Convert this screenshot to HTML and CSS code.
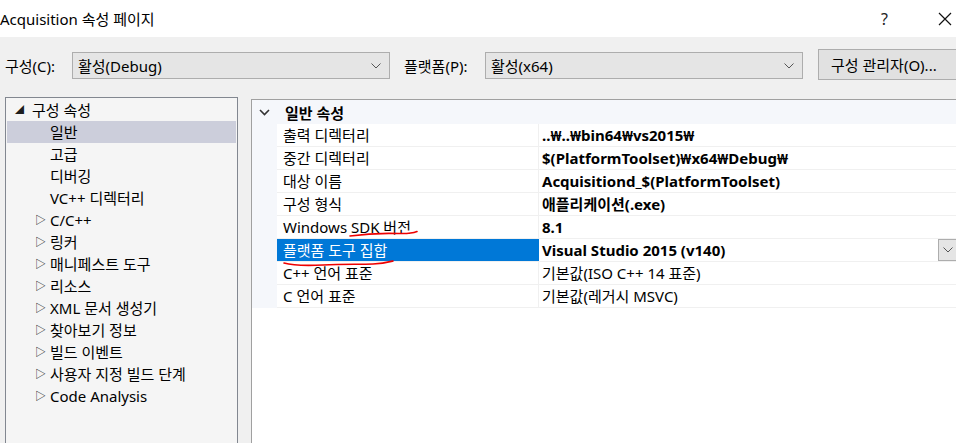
FILE: index.html
```
<!DOCTYPE html>
<html lang="ko">
<head>
	<meta charset="UTF-8">
	<title>Acquisition 속성 페이지</title>
	<link rel="stylesheet" href="styles.css">
</head>
<body>
	<div class="titlebar">
		<div class="title">Acquisition 속성 페이지</div>
		<div class="title-help">?</div>
		<div class="title-close">
			<svg width="14" height="14" viewBox="0 0 14 14"><path d="M1 1L13 13M13 1L1 13" stroke="#111" stroke-width="1.2" fill="none"/></svg>
		</div>
	</div>

	<div class="toolbar">
		<label class="tb-label">구성(C):</label>
		<div class="combo combo-config">
			<span>활성(Debug)</span>
			<svg class="combo-arrow" width="10" height="6" viewBox="0 0 10 6"><path d="M0.5 0.5L5 5L9.5 0.5" stroke="#555" fill="none"/></svg>
		</div>
		<label class="tb-label tb-label-platform">플랫폼(P):</label>
		<div class="combo combo-platform">
			<span>활성(x64)</span>
			<svg class="combo-arrow" width="10" height="6" viewBox="0 0 10 6"><path d="M0.5 0.5L5 5L9.5 0.5" stroke="#555" fill="none"/></svg>
		</div>
		<button class="btn-manager">구성 관리자(O)...</button>
	</div>

	<div class="main">
		<div class="tree">
			<div class="tree-item root"><span class="arrow-open">◢</span>구성 속성</div>
			<div class="tree-item child selected">일반</div>
			<div class="tree-item child">고급</div>
			<div class="tree-item child">디버깅</div>
			<div class="tree-item child">VC++ 디렉터리</div>
			<div class="tree-item node"><span class="arrow-closed">▷</span>C/C++</div>
			<div class="tree-item node"><span class="arrow-closed">▷</span>링커</div>
			<div class="tree-item node"><span class="arrow-closed">▷</span>매니페스트 도구</div>
			<div class="tree-item node"><span class="arrow-closed">▷</span>리소스</div>
			<div class="tree-item node"><span class="arrow-closed">▷</span>XML 문서 생성기</div>
			<div class="tree-item node"><span class="arrow-closed">▷</span>찾아보기 정보</div>
			<div class="tree-item node"><span class="arrow-closed">▷</span>빌드 이벤트</div>
			<div class="tree-item node"><span class="arrow-closed">▷</span>사용자 지정 빌드 단계</div>
			<div class="tree-item node"><span class="arrow-closed">▷</span>Code Analysis</div>
		</div>

		<div class="grid">
			<div class="grid-category">
				<svg class="cat-chevron" width="11" height="7" viewBox="0 0 11 7"><path d="M1 1L5.5 5.5L10 1" stroke="#333" stroke-width="1.6" fill="none"/></svg>
				<span>일반 속성</span>
			</div>
			<div class="grid-body">
				<div class="row"><div class="name">출력 디렉터리</div><div class="value">..₩..₩bin64₩vs2015₩</div></div>
				<div class="row"><div class="name">중간 디렉터리</div><div class="value">$(PlatformToolset)₩x64₩Debug₩</div></div>
				<div class="row"><div class="name">대상 이름</div><div class="value">Acquisitiond_$(PlatformToolset)</div></div>
				<div class="row"><div class="name">구성 형식</div><div class="value">애플리케이션(.exe)</div></div>
				<div class="row"><div class="name">Windows SDK 버전</div><div class="value">8.1</div></div>
				<div class="row row-selected">
					<div class="name">플랫폼 도구 집합</div>
					<div class="value">Visual Studio 2015 (v140)
						<div class="value-drop">
							<svg width="10" height="6" viewBox="0 0 10 6"><path d="M0.5 0.5L5 5L9.5 0.5" stroke="#555" fill="none"/></svg>
						</div>
					</div>
				</div>
				<div class="row"><div class="name">C++ 언어 표준</div><div class="value normal">기본값(ISO C++ 14 표준)</div></div>
				<div class="row"><div class="name">C 언어 표준</div><div class="value normal">기본값(레거시 MSVC)</div></div>
			</div>

			<svg class="mark mark-sdk" width="70" height="8" viewBox="0 0 70 8"><path d="M1 6C15 4 35 3 50 3.5C58 3.8 64 3 68 1.5" stroke="#e00" stroke-width="1.6" fill="none" stroke-linecap="round"/></svg>
			<svg class="mark mark-toolset" width="112" height="9" viewBox="0 0 112 9"><path d="M1 4C8 6 20 7 40 6C60 5 75 5.5 90 5C100 4.6 106 3 110 2" stroke="#e00" stroke-width="1.6" fill="none" stroke-linecap="round"/></svg>
		</div>
	</div>
</body>
</html>
```

FILE: styles.css
```
* {
	margin: 0;
	padding: 0;
	box-sizing: border-box;
}
body {
	width: 956px;
	height: 443px;
	overflow: hidden;
	background: #f0f0f0;
	font-family: "Noto Sans", "Noto Sans CJK KR", sans-serif;
	font-size: 15px;
	color: #000;
}

.titlebar {
	height: 37px;
	background: #fff;
	display: flex;
	align-items: center;
}
.title {
	flex: 1;
	font-size: 15px;
	line-height: 20px;
}
.title-help {
	width: 57px;
	font-size: 16px;
	color: #222;
}
.title-close {
	width: 18px;
	display: flex;
	align-items: center;
}

.toolbar {
	height: 60px;
	display: flex;
	align-items: center;
	padding-left: 5px;
	padding-bottom: 3px;
}
.toolbar > * {
	flex-shrink: 0;
}
.tb-label {
	width: 67px;
	line-height: 20px;
}
.tb-label-platform {
	width: 81px;
	margin-left: 14px;
}
.combo {
	height: 27px;
	background: #e5e5e5;
	border: 1px solid #adadad;
	display: flex;
	align-items: center;
	justify-content: space-between;
	padding: 0 5px 0 5px;
}
.combo-config {
	width: 318px;
}
.combo-platform {
	width: 318px;
}
.combo-arrow {
	margin-right: 3px;
}
.btn-manager {
	margin-left: 15px;
	height: 31px;
	width: 150px;
	background: #e1e1e1;
	border: 1px solid #adadad;
	font-family: inherit;
	font-size: 15px;
	text-align: left;
	padding-left: 12px;
	white-space: nowrap;
	margin-top: -2px;
}

.main {
	display: flex;
	align-items: flex-start;
	padding-left: 5px;
}
.main > * {
	flex-shrink: 0;
}
.tree {
	width: 233px;
	height: 360px;
	background: #f5f5f5;
	border: 1px solid #828790;
	padding: 1px;
}
.tree-item {
	height: 22px;
	line-height: 22px;
	white-space: nowrap;
	display: flex;
	align-items: center;
}
.tree-item.root {
	padding-left: 8px;
}
.tree-item.child {
	padding-left: 43px;
}
.tree-item.node {
	padding-left: 28px;
}
.tree-item.selected {
	background: #cccedb;
}
.arrow-open {
	font-size: 9px;
	width: 17px;
	color: #1e1e1e;
}
.arrow-closed {
	font-size: 11px;
	width: 15px;
	color: #1e1e1e;
}

.grid {
	position: relative;
	margin-left: 13px;
	margin-top: 2px;
	width: 706px;
	height: 360px;
	background: #fff;
	border: 1px solid #a0a0a0;
	border-right: none;
}
.grid-category {
	height: 24px;
	background: #f5f7fb;
	display: flex;
	align-items: center;
	font-weight: 600;
}
.cat-chevron {
	margin: 0 15px 0 7px;
}
.grid-body {
	padding-left: 25px;
	background: linear-gradient(to right, #f5f7fb 25px, #fff 25px);
}
.row {
	display: flex;
	height: 23px;
	border-bottom: 1px solid #f0f0f0;
	background: #fff;
}
.name {
	width: 262px;
	padding-left: 6px;
	line-height: 22px;
	border-right: 1px solid #f0f0f0;
	white-space: nowrap;
}
.value {
	flex: 1;
	padding-left: 3px;
	line-height: 22px;
	font-weight: bold;
	white-space: nowrap;
	position: relative;
}
.value.normal {
	font-weight: normal;
}
.row-selected .name {
	background: #0078d7;
	color: #fff;
	border-right-color: #0078d7;
}
.value-drop {
	position: absolute;
	right: 0;
	top: 0;
	width: 19px;
	height: 22px;
	background: #e5e5e5;
	border: 1px solid #adadad;
	display: flex;
	align-items: center;
	justify-content: center;
}

.mark {
	position: absolute;
}
.mark-sdk {
	left: 97px;
	top: 130px;
}
.mark-toolset {
	left: 31px;
	top: 159px;
}
```
